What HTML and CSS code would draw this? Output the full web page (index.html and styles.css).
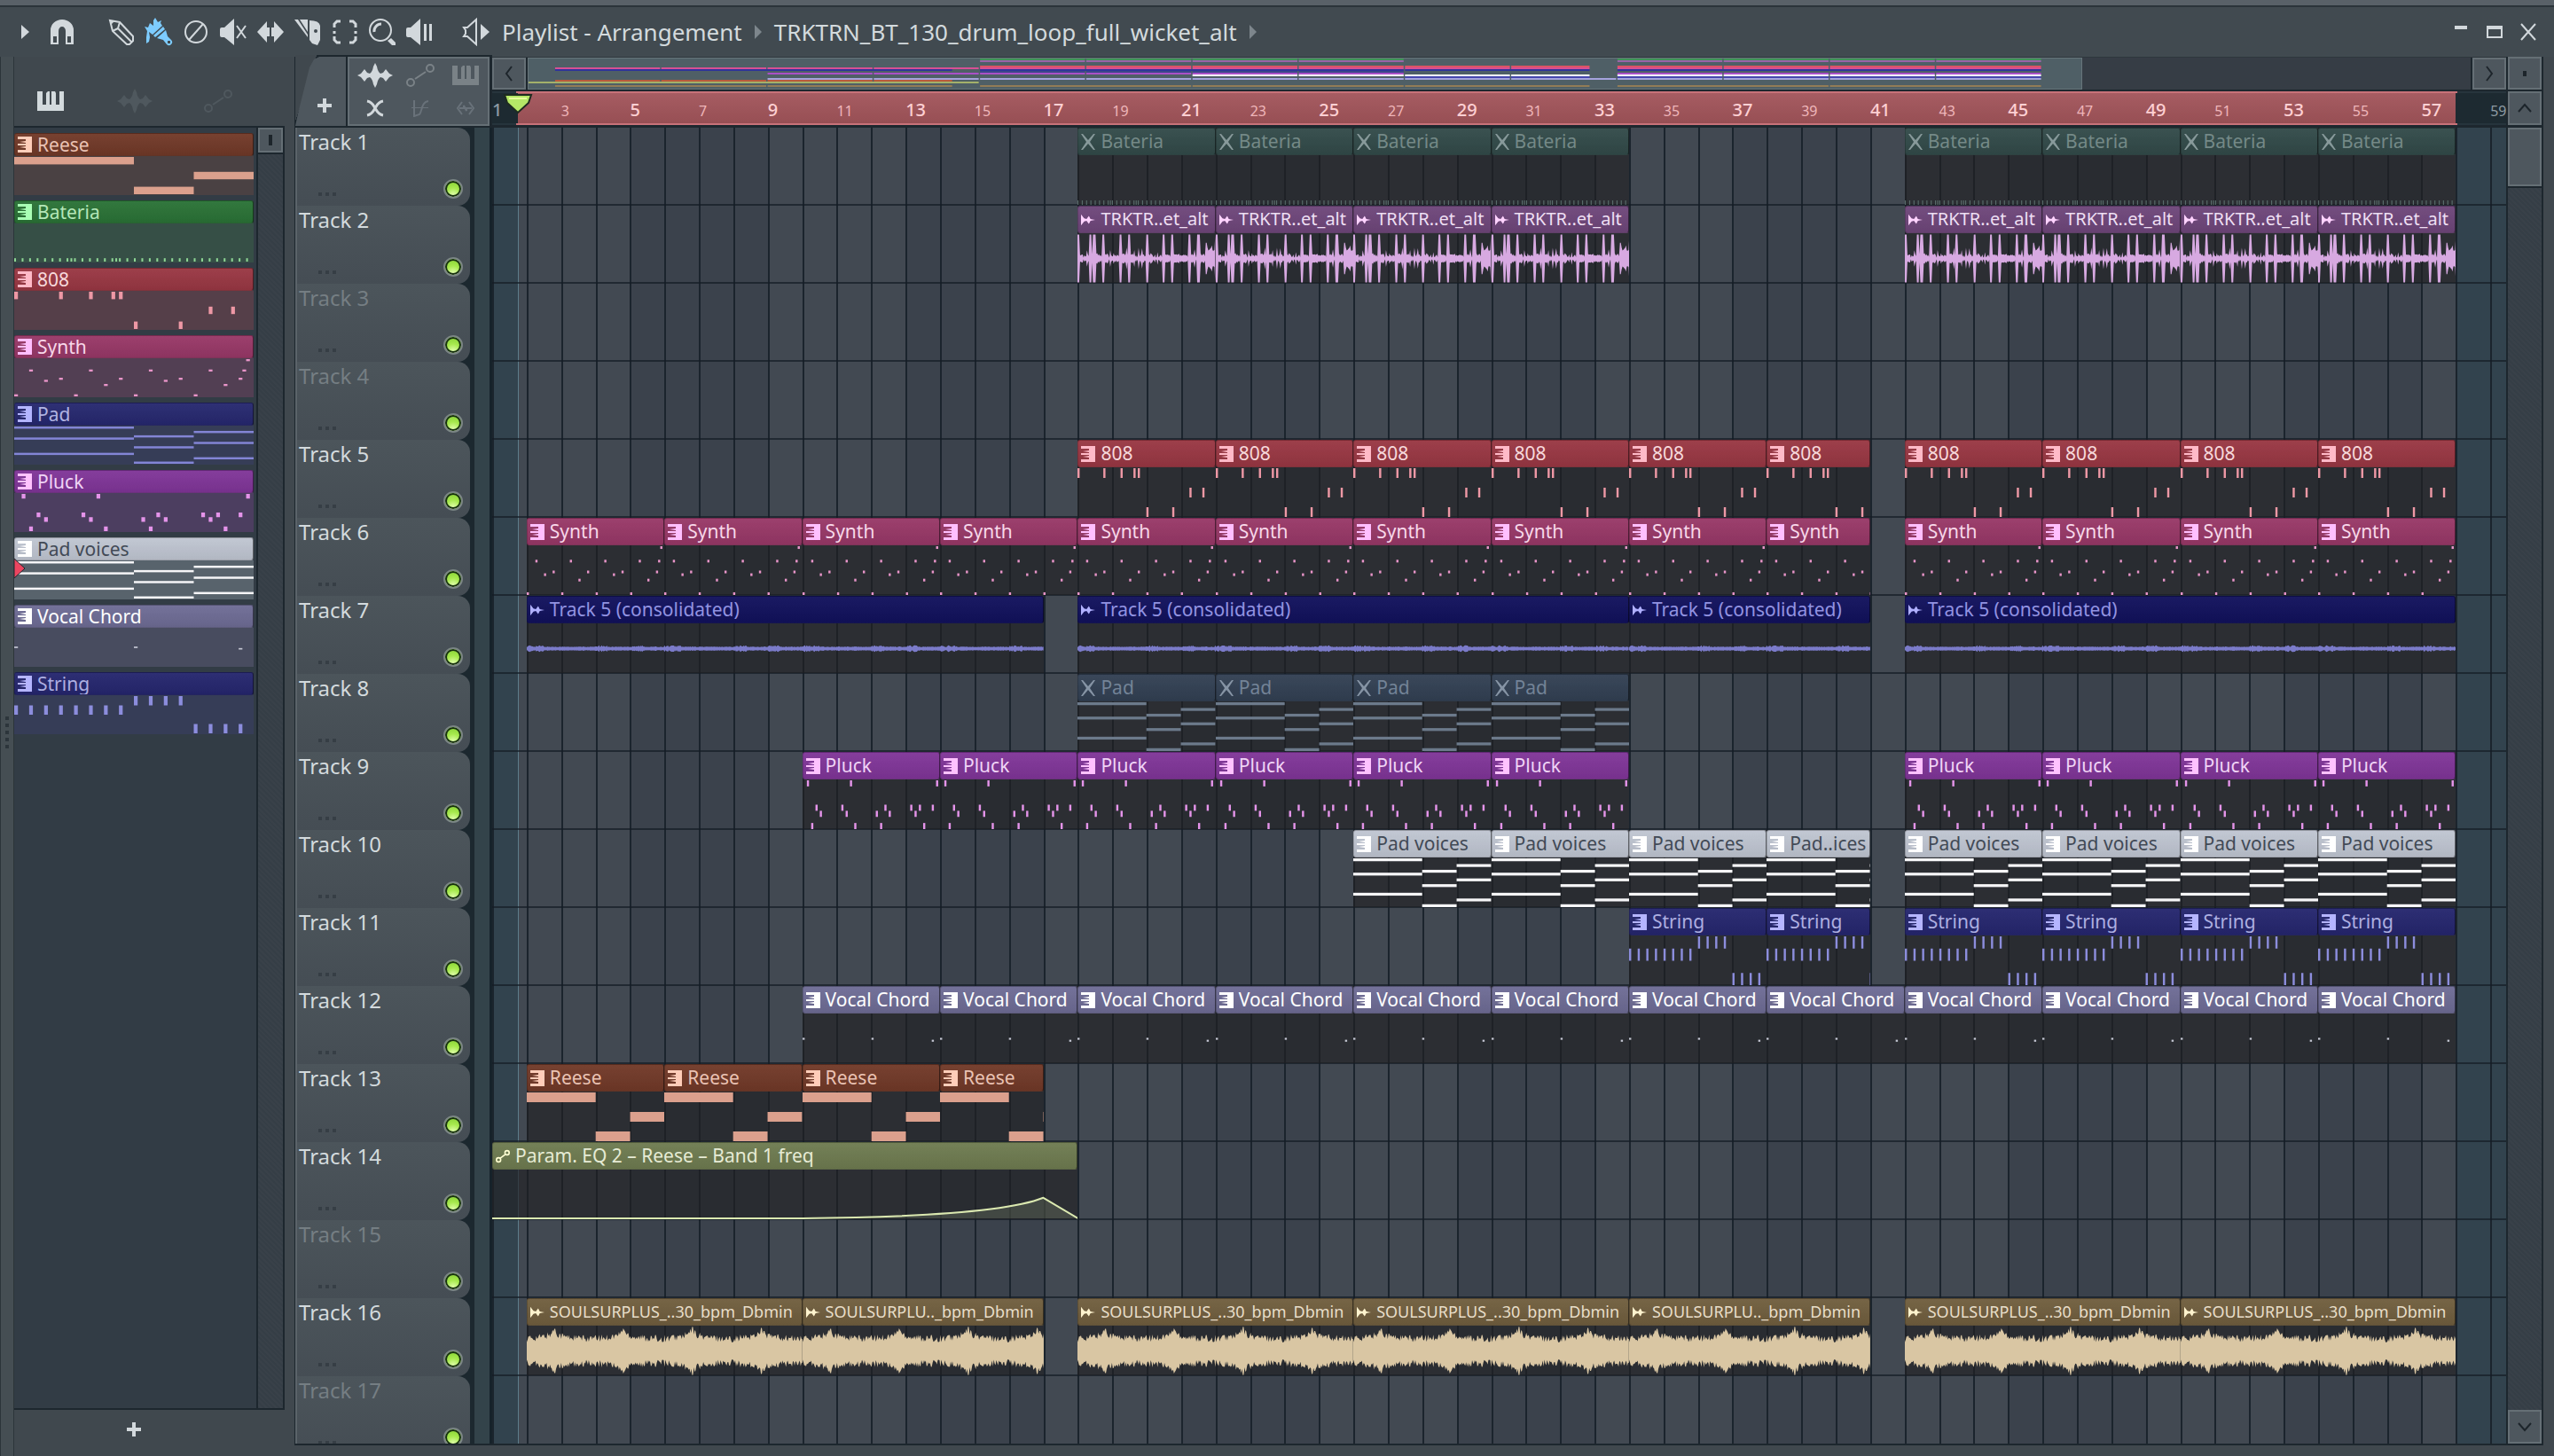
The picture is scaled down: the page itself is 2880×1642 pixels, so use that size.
FILE: index.html
```
<!DOCTYPE html>
<html lang="en">
<head>
    <meta charset="UTF-8" />
    <meta name="viewport" content="width=device-width, initial-scale=1.0" />
    <link rel="stylesheet" href="styles.css">
    <title>Playlist - Arrangement</title>
</head>
<body>
    <div class="strip"></div>
    <header class="titlebar">
        <button class="tool tool-menu" aria-label="Menu"><svg width="10" height="18" viewBox="0 0 10 18"><path d="M0 1L9 9L0 17Z"/></svg></button>
        <button class="tool tool-snap" aria-label="Snap"><svg width="28" height="30" viewBox="0 0 28 30"><path d="M1 29V13a13 12 0 0 1 26 0v16h-9V14a4 5 0 0 0-8 0v15Z"/><path class="hole" d="M4 20h4v7H4ZM20 20h4v7h-4Z"/></svg></button>
        <div class="tools">
            <button class="tool" aria-label="Draw"><svg width="30" height="30" viewBox="0 0 30 30"><path class="line" d="M2 2l11 2 15 16v5l-4 4h-3L5 14ZM13 4l-2 7-6 3M11 11l15 15"/><path d="M2 2l5 1-4 4Z"/></svg></button>
            <button class="tool active" aria-label="Paint"><svg width="32" height="32" viewBox="0 0 32 32"><path d="M0 10l4 1 2-5 4 3V3l2-3 3 5 4-2-1 3 2 3L9 19l-4-3 1 6-1 5-3 2 0-7 1-7Z"/><path d="M21 10l2 3-11 9-2-2Z"/><path fill-rule="evenodd" d="M24 14l2 7 4 4a3 3 0 0 1-5 5l-4-5-7-2ZM26 26v3h3v-3Z"/></svg></button>
            <button class="tool" aria-label="Delete"><svg width="30" height="30" viewBox="0 0 30 30"><circle class="line" cx="15" cy="15" r="12"/><path class="line" d="M7 24L23 6"/></svg></button>
            <button class="tool" aria-label="Mute"><svg width="32" height="32" viewBox="0 0 32 32"><path d="M1 13q0-2 2-2h3L17 1v30L6 22H3q-2 0-2-2Z"/><path class="line" d="M20 9l10 14M30 9L20 23"/></svg></button>
            <button class="tool" aria-label="Slip"><svg width="32" height="30" viewBox="0 0 32 30"><path d="M1 15L12 3v7h3v10h-3v7ZM31 15L20 3v7h-3v10h3v7Z"/></svg></button>
            <button class="tool" aria-label="Slice"><svg width="32" height="32" viewBox="0 0 32 32"><path d="M1 2h4l11 17v3ZM7 2h9v14ZM18 3q11 0 12 6v16l-3 6-6-2-3-4Z"/><circle class="hole" cx="25" cy="15" r="2"/></svg></button>
            <button class="tool" aria-label="Select"><svg width="30" height="30" viewBox="0 0 30 30"><path class="line thick" d="M10 3H6L3 6v4M20 3h4l3 3v4M10 27H6l-3-3v-4M20 27h4l3-3v-4M3 14v3M27 14v3"/></svg></button>
            <button class="tool" aria-label="Zoom"><svg width="32" height="32" viewBox="0 0 32 32"><circle class="line" cx="14" cy="14" r="12"/><path class="line thick" d="M7 16a8 8 0 0 1 8-9"/><path d="M22 26l4-3 5 5v3h-4Z"/></svg></button>
            <button class="tool" aria-label="Playback"><svg width="32" height="32" viewBox="0 0 32 32"><path d="M1 13q0-2 2-2h3L17 1v30L6 22H3q-2 0-2-2ZM21 7h3v19h-3ZM27 7h3v19h-3Z"/></svg></button>
        </div>
        <button class="tool tool-preview" aria-label="Preview"><svg width="32" height="32" viewBox="0 0 32 32"><path class="line" d="M2 11h4l10-9v28L6 21H2l2-3v-4Z"/><path d="M21 7l10 9-10 9Z"/></svg></button>
        <h1 class="crumbs">
            <a href="#">Playlist - Arrangement</a>
            <svg width="8" height="16" viewBox="0 0 8 16"><path d="M0 0l8 8-8 8Z"/></svg>
            <a href="#">TRKTRN_BT_130_drum_loop_full_wicket_alt</a>
            <svg width="8" height="16" viewBox="0 0 8 16"><path d="M0 0l8 8-8 8Z"/></svg>
        </h1>
        <div class="window-buttons">
            <button class="tool" aria-label="Minimize"><svg width="18" height="18" viewBox="0 0 18 18"><path d="M2 2h14v4H2Z"/></svg></button>
            <button class="tool" aria-label="Maximize"><svg width="18" height="18" viewBox="0 0 18 18"><path fill-rule="evenodd" d="M0 2h18v14H0ZM2 6v8h14V6Z"/></svg></button>
            <button class="tool" aria-label="Close"><svg width="20" height="20" viewBox="0 0 20 20"><path class="line" d="M2 1l16 18M18 1L2 19"/></svg></button>
        </div>
    </header>

    <main>
        <div class="gutter"><i></i><i></i><i></i><i></i><i></i></div>

        <aside class="picker">
            <div class="picker-tabs">
                <button aria-label="Patterns"><svg width="32" height="24" viewBox="0 0 32 24"><use href="#piano"/></svg></button>
                <button class="off" aria-label="Audio"><svg width="40" height="28" viewBox="0 0 40 28"><use href="#wave"/></svg></button>
                <button class="off" aria-label="Automation"><svg width="32" height="26" viewBox="0 0 32 26"><use href="#auto"/></svg></button>
            </div>
            <div class="picker-body">
                <ul id="picker"></ul>
                <div class="picker-scroll"><button class="thumb" aria-label="Scroll patterns"><i></i></button></div>
            </div>
            <button class="add" aria-label="Add pattern"><svg width="16" height="16" viewBox="0 0 16 16"><path d="M6 0h4v6h6v4h-6v6H6v-6H0V6h6Z"/></svg></button>
        </aside>

        <section class="playlist">
            <div class="corner">
                <button class="add-track" aria-label="Add track"><svg width="16" height="16" viewBox="0 0 16 16"><path d="M6 0h4v6h6v4h-6v6H6v-6H0V6h6Z"/></svg></button>
                <div class="modes">
                    <button aria-label="Show audio"><svg width="40" height="28" viewBox="0 0 40 28"><use href="#wave"/></svg></button>
                    <button class="off" aria-label="Show automation"><svg width="32" height="26" viewBox="0 0 32 26"><use href="#auto"/></svg></button>
                    <button class="off" aria-label="Show patterns"><svg width="32" height="24" viewBox="0 0 32 24"><use href="#piano"/></svg></button>
                    <button aria-label="Crossfade"><svg width="20" height="20" viewBox="0 0 20 20"><path class="line thick" d="M1 2c6 1 7 5 9 8s3 7 9 8M19 2c-6 1-7 5-9 8s-3 7-9 8"/></svg></button>
                    <button class="faint" aria-label="Slide"><svg width="22" height="20" viewBox="0 0 22 20"><path class="line" d="M4 1v18l6-2c3-3 2-14 10-15"/><path d="M1 9h19v1H1Z"/></svg></button>
                    <button class="faint" aria-label="Stretch"><svg width="22" height="16" viewBox="0 0 22 16"><path class="line" d="M7 1L2 8l5 7M15 1l5 7-5 7M4 8h5V5l3 6V8h6"/></svg></button>
                </div>
            </div>

            <div class="overview">
                <button class="scroll-btn" aria-label="Scroll left"><svg width="12" height="18" viewBox="0 0 12 18"><path d="M9 1L3 9l6 8"/></svg></button>
                <div class="map-track"><div class="map" id="map"></div></div>
                <button class="scroll-btn" aria-label="Scroll right"><svg width="12" height="18" viewBox="0 0 12 18"><path d="M3 1l6 8-6 8"/></svg></button>
            </div>
            <button class="scroll-btn dot" aria-label="Zoom"><i></i></button>

            <div class="ruler" id="ruler">
                <svg class="playhead" width="34" height="24" viewBox="0 0 34 24"><path d="M2 2h30l-3 9-12 11L5 11Z"/><path class="shine" d="M7 6h20"/></svg>
            </div>
            <button class="scroll-btn" aria-label="Scroll up"><svg width="18" height="12" viewBox="0 0 18 12"><path d="M2 10l7-8 7 8"/></svg></button>

            <div class="heads" id="heads"></div>
            <div class="lanes" id="lanes"></div>
            <div class="vscroll">
                <div class="vthumb"></div>
                <button class="scroll-btn" aria-label="Scroll down"><svg width="18" height="12" viewBox="0 0 18 12"><path d="M2 2l7 8 7-8"/></svg></button>
            </div>
        </section>
    </main>

    <svg class="defs" aria-hidden="true">
        <symbol id="piano" viewBox="0 0 32 24"><path d="M1 1h6v15h4V3l2-2h2v15h2V1h2v0h2l1 2v13h4V1h5v22H1Z"/></symbol>
        <symbol id="wave" viewBox="0 0 40 28"><path d="M0 14l4-2 4-5 3 4 3 1q3-2 4-8l2-4 2 4q1 6 4 8l3-1 3-4 4 5 4 2-4 2-4 5-3-4-3-1q-3 2-4 8l-2 4-2-4q-1-6-4-8l-3 1-3 4-4-5Z"/></symbol>
        <symbol id="auto" viewBox="0 0 32 26"><circle class="line" cx="5" cy="21" r="4"/><circle class="line" cx="27" cy="5" r="4"/><path class="line" d="M10 17L22 9"/></symbol>
        <symbol id="c-pattern" viewBox="0 0 16 18"><path d="M0 0h16v18H0v-3h9v-2l-7-1 7-1v-1H0V8h9V7L2 6l7-1V3H0Z"/></symbol>
        <symbol id="c-audio" viewBox="0 0 18 18"><path d="M0 2l4 5 3 1 3-4 2 4 6 1-6 1-2 4-3-4-3 1-4 5Z"/></symbol>
        <symbol id="c-mute" viewBox="0 0 16 18"><path d="M0 0h2l6 7 6-7h2l-6 9 6 9h-2l-6-7-6 7H0l6-9Z"/></symbol>
        <symbol id="c-auto" viewBox="0 0 20 18"><circle class="line" cx="4" cy="14" r="3"/><circle class="line" cx="16" cy="4" r="3"/><path class="line" d="M6 12L14 6"/></symbol>
    </svg>

    <script src="script.js"></script>
</body>
</html>
```
FILE: styles.css
```
:root {
    --bars: 58.46;
    --bar: calc(100% / var(--bars));
    --edge: #1d272e;
    --btn: #4e575e;
    --btn-line: #656f75;
    --icon: #d2d8dc;
}

* {
    box-sizing: border-box;
}

body {
    margin: 0;
    height: 100vh;
    display: flex;
    flex-direction: column;
    overflow: hidden;
    background-color: #40484e;
    color: #d3dadd;
    font-family: "Noto Sans", "Open Sans", sans-serif;
    font-size: 20px;
}

button {
    margin: 0;
    padding: 0;
    border: none;
    background: none;
    color: inherit;
    font: inherit;
    display: flex;
    align-items: center;
    justify-content: center;
}

svg {
    display: block;
    fill: currentColor;
}

.line {
    fill: none;
    stroke: currentColor;
    stroke-width: 2;
}

.thick {
    stroke-width: 3;
}

.defs {
    position: absolute;
    width: 0;
    height: 0;
}

.strip {
    flex: none;
    height: 8px;
    background-color: #596168;
    border-bottom: 2px solid #2b343a;
}

/* title bar */

.titlebar {
    flex: none;
    height: 56px;
    display: flex;
    align-items: center;
    padding: 0 10px 0 16px;
    background-color: #414a50;
}

.tools, .window-buttons {
    display: flex;
}

.tool {
    width: 42px;
    height: 40px;
    color: var(--icon);
}

.tool-menu {
    width: 26px;
}

.tool-snap {
    width: 56px;
    margin-right: 18px;
}

.tool-preview {
    margin: 0 8px 0 22px;
}

.tool.active {
    color: #7dccff;
}

.hole {
    fill: #414a50;
}

.crumbs {
    flex: 1;
    display: flex;
    align-items: center;
    gap: 14px;
    margin: 0;
    font-size: 26px;
    line-height: 36px;
    font-weight: 400;
    white-space: nowrap;
}

.crumbs a {
    color: #d3dadd;
    text-decoration: none;
}

.crumbs svg {
    color: #7d868c;
}

.window-buttons .tool {
    width: 38px;
}

main {
    flex: 1;
    min-height: 0;
    display: flex;
    padding: 0 12px 14px 0;
}

.gutter {
    flex: none;
    width: 16px;
    margin-bottom: -14px;
    padding-bottom: 54px;
    display: flex;
    flex-direction: column;
    align-items: center;
    justify-content: center;
    gap: 4px;
    border-left: 1px solid #2c353a;
    border-right: 1px solid #2c353a;
    background-color: #454e53;
}

.gutter i {
    width: 4px;
    height: 4px;
    background-color: #2c353b;
}

/* picker */

.picker {
    flex: none;
    width: 305px;
    margin-right: 11px;
    display: flex;
    flex-direction: column;
}

.picker-tabs {
    height: 78px;
    padding: 22px 59px 0 25px;
    display: flex;
    align-items: center;
    justify-content: space-between;
}

.off {
    color: #757e83;
}

.picker-tabs .off {
    color: #4f585e;
}

.picker-body {
    flex: 1;
    min-height: 0;
    display: flex;
    border: solid var(--edge);
    border-width: 2px 2px 2px 0;
    background-color: #323c45;
}

.picker ul {
    flex: 1;
    margin: 0;
    padding: 6px 3px 0 0;
    list-style: none;
    border-right: 2px solid var(--edge);
}

.picker li {
    position: relative;
    height: 70px;
    margin-bottom: 6px;
}

.picker .clip-head {
    height: 26px;
    line-height: 24px;
}

.picker .clip-head span {
    padding-bottom: 0;
}

.picker .clip-body {
    height: 44px;
    padding: 1px 0;
    background-color: var(--body);
}

.cursor {
    position: absolute;
    left: 0;
    top: 23px;
    color: #ec4560;
    stroke: #20262c;
}

.picker-scroll, .vscroll {
    background: repeating-linear-gradient(45deg, #353e46 0 2px, #394149 2px 4px);
}

.picker-scroll {
    width: 28px;
}

.thumb {
    width: 28px;
    height: 28px;
    background-color: var(--btn);
    border: 2px solid var(--btn-line);
    box-shadow: 0 2px var(--edge);
}

.thumb i {
    width: 4px;
    height: 12px;
    background-color: #1d252b;
}

.add {
    height: 38px;
    padding-top: 6px;
    margin-right: 36px;
    color: var(--icon);
}

/* playlist */

.playlist {
    flex: 1;
    min-width: 0;
    display: grid;
    grid-template-columns: 222px minmax(0, 1fr) 40px;
    grid-template-rows: 39px 41px minmax(0, 1fr);
    border: solid var(--edge);
    border-width: 0 2px 2px 1px;
    margin-bottom: -2px;
    background-color: var(--edge);
}

.corner {
    grid-row: 1 / 3;
    display: flex;
    gap: 2px;
    margin-top: -2px;
    padding: 2px 3px 2px 0;
    background: linear-gradient(108deg, #40484e 23px, var(--edge) 23px);
}

.add-track {
    width: 57px;
    padding: 32px 0 0 8px;
    background-color: var(--btn);
    clip-path: polygon(27px 0, 100% 0, 100% 100%, 0 100%, 3px 64px, 16px 12px, 21px 3px);
    color: var(--icon);
}

.modes {
    flex: 1;
    display: grid;
    grid-template-columns: repeat(3, 1fr);
    grid-template-rows: 1fr 1fr;
    padding: 0 0 0 4px;
    background-color: var(--btn);
    border: 2px solid var(--btn-line);
}

.modes button {
    color: var(--icon);
}

.modes .off {
    color: #7a8287;
}

.modes .faint {
    color: #69727a;
}

.scroll-btn {
    width: 38px;
    height: 38px;
    background-color: var(--btn);
    border: 2px solid var(--btn-line);
}

.scroll-btn svg {
    fill: none;
    stroke: #1d252b;
    stroke-width: 2;
}

.playlist > .scroll-btn {
    margin-left: 2px;
}

.playlist > .dot {
    height: 37px;
}

.dot i {
    width: 4px;
    height: 6px;
    background-color: #1d252b;
}

.overview {
    display: flex;
    border-top: 1px solid #2e373d;
    padding-bottom: 2px;
    gap: 2px;
}

.overview .scroll-btn {
    height: 36px;
}

.map-track {
    flex: 1;
    min-width: 0;
    background-color: #363d45;
}

.map {
    width: 80%;
    height: 36px;
    border: 1px solid #67757a;
    background-color: #4f5f66;
}

.map svg {
    width: 100%;
    height: 34px;
}

.ruler {
    position: relative;
    display: grid;
    grid-template-columns: repeat(58, minmax(0, 100fr)) minmax(0, 46fr);
    height: 38px;
    border-top: 2px solid #c87279;
    border-bottom: 2px solid #c87279;
    border-image: linear-gradient(90deg, #26343c calc(var(--bar) * .74), #c87279 0 calc(var(--bar) * 57), #26343c 0) 2;
    background: linear-gradient(90deg, #1d2a31 calc(var(--bar) * .74), transparent 0 calc(var(--bar) * 57), #1d2a31 0), linear-gradient(#a65c62, #974f54);
}

.ruler span {
    grid-row: 1;
    font-size: 16px;
    line-height: 40px;
    color: #efb6ba;
    white-space: nowrap;
}

.ruler .major {
    font-size: 20px;
    line-height: 38px;
    font-weight: 500;
    color: #ffd0d3;
}

.ruler .outside {
    color: #8d9ba3;
}

.playhead {
    position: absolute;
    left: calc(var(--bar) * .74 - 17px);
    top: 0;
    fill: #b5e767;
    stroke: #1e2b20;
    stroke-width: 2;
}

.playhead .shine {
    stroke: #e7ff9c;
}

.heads {
    overflow: hidden;
    display: flex;
    flex-direction: column;
    background: linear-gradient(90deg, #1c282f 202px, #33434a 202px 219px, #16222a 219px);
}

.head {
    flex: none;
    position: relative;
    width: 197px;
    height: 88px;
    padding: 0 8px 8px 2px;
    display: grid;
    grid-template-columns: 1fr auto;
    grid-template-rows: 32px 1fr;
    background: linear-gradient(#4c555b, #454d54);
    border-left: 2px solid #5b646a;
    border-radius: 0 14px 14px 0;
}

.head label {
    grid-column: 1 / 3;
    font-size: 24px;
    line-height: 32px;
}

.head.empty label {
    color: #757e83;
}

.head button {
    align-self: end;
    justify-content: flex-start;
    gap: 4px;
    height: 10px;
    padding-left: 22px;
}

.head button i {
    width: 4px;
    height: 4px;
    background-color: #363e45;
}

.head input {
    appearance: none;
    align-self: end;
    width: 22px;
    height: 22px;
    margin: 0;
    border: 2px solid #7b8585;
    border-radius: 50%;
    background: radial-gradient(circle at 50% 90%, #e4ffb0, #a7e94e 45%, #7ecb2c);
    box-shadow: inset 0 0 0 2px #173010;
}

.lanes {
    overflow: hidden;
    display: flex;
    flex-direction: column;
    background:
        linear-gradient(90deg, transparent calc(var(--bar) * .74), #5d7d8a 0 calc(var(--bar) * .74 + 1px), transparent 0),
        repeating-linear-gradient(90deg, #1b242d 0 2px, transparent 2px var(--bar)),
        linear-gradient(90deg, #32434e calc(var(--bar) * .74), transparent 0 calc(var(--bar) * 57), #32434e 0),
        repeating-linear-gradient(90deg, #424952 0 calc(var(--bar) * 4), #3b424c 0 calc(var(--bar) * 8));
}

.lane {
    flex: none;
    height: 88px;
    display: grid;
    grid-template-columns: repeat(58, minmax(0, 100fr)) minmax(0, 46fr);
    border-bottom: 2px solid #141c25b3;
}

.vscroll {
    display: flex;
    flex-direction: column;
    justify-content: space-between;
    margin-left: 2px;
}

.vthumb {
    height: 66px;
    background-color: var(--btn);
    border: 2px solid var(--btn-line);
    box-shadow: 0 2px var(--edge);
}

/* clips */

.clip {
    grid-row: 1;
    min-width: 0;
    background-color: #212023a6;
}

.clip-head {
    height: 31px;
    display: flex;
    align-items: center;
    gap: 6px;
    padding-left: 3px;
    overflow: hidden;
    white-space: nowrap;
    color: var(--text);
    background: linear-gradient(#ffffff0a, #00000012), var(--head);
    border: 1px solid #0000002e;
    border-right-color: #00000080;
    border-radius: 3px;
    font-size: 21px;
    line-height: 26px;
}

.clip-head span {
    padding-bottom: 2px;
}

.drums .clip-head {
    font-size: 20px;
}

.soul .clip-head {
    font-size: 18px;
}

.clip-head svg {
    flex: none;
    color: var(--mark);
}

.clip-body {
    height: 56px;
    padding-top: 1px;
    color: var(--note);
}

.clip-body svg {
    width: 100%;
    height: 100%;
}

.curve {
    fill: none;
    stroke: currentColor;
    stroke-width: 2;
    vector-effect: non-scaling-stroke;
}

.area {
    fill: #d9e8ac26;
}

.reese { --head: #713928; --text: #ebc3b4; --mark: #ffcdb9; --note: #dba08d; --body: #4a4143; }
.bateria { --head: #2a7236; --text: #b4e6b8; --mark: #a9ffb5; --note: #8ed695; --body: #364f46; }
.s808 { --head: #993743; --text: #f7d9dc; --mark: #ffbac8; --note: #ee98a5; --body: #553f49; }
.synth { --head: #983867; --text: #f8d8ea; --mark: #ffbfff; --note: #e995c9; --body: #523f53; }
.pad { --head: #26286f; --text: #b0b3e2; --mark: #b3b5ff; --note: #8385d6; --body: #363d57; }
.pluck { --head: #803598; --text: #f0d4f6; --mark: #ffc2ff; --note: #e594ea; --body: #4c3e60; }
.voices { --head: #bfc5d1; --text: #424a56; --mark: #ffffff; --note: #f6f6f8; --body: #58636c; }
.vocal { --head: #6e6c95; --text: #ffffff; --mark: #ffffff; --note: #c5c7d4; --body: #484c5f; }
.string { --head: #25266e; --text: #adafe1; --mark: #b5b5ff; --note: #8c8ddd; --body: #363d57; }
.drums { --head: #6e467a; --text: #eedff3; --mark: #ffd3ff; --note: #d7a9e1; }
.track5 { --head: #11115c; --text: #9293e2; --mark: #b0b0ff; --note: #7b7bca; }
.param { --head: #6e7b50; --text: #e6ebd5; --mark: #ffffd2; --note: #dbe9b0; }
.soul { --head: #705e3e; --text: #e8dec9; --mark: #fff3ce; --note: #d9c6a3; }
.bateria.muted { --head: #324a49; --text: #748987; --mark: #87999a; --note: #586b6a; }
.pad.muted { --head: #324053; --text: #738397; --mark: #8694a5; --note: #6c7a8b; }
```
FILE: script.js
```
const BARS = 58.46;

// every note is [start bar, row, length in bars]
const tick = 1 / 16;
const hits = (row, starts, len = tick) => starts.map(s => [s, row, len]);

const patterns = {
    reese: { rows: 5, notes: [[0, 0, 2], [2, 4, 1], [3, 2, 1]] },
    bateria: { rows: 11, notes: hits(10, [...Array(32).keys()].map(i => i / 8).concat([0.94, 1.69]), 0.03) },
    s808: { rows: 5, notes: [...hits(0, [0, 0.75, 1.25, 1.625, 1.75]), ...hits(4, [2, 2.75]), ...hits(2, [3.25, 3.625])] },
    synth: { rows: 18, notes: [...hits(0, [3.875]), ...hits(5, [0.25, 1.25, 2.25, 3.25, 3.8125]), ...hits(9, [0.75, 1.75, 2.75, 3.75]), ...hits(10, [0.5, 2.5]), ...hits(12, [1.5, 3.5]), ...hits(17, [0, 1, 2, 3])] },
    pad: { rows: 17, notes: [[0, 0, 2], [0, 5, 2], [0, 12, 2], [2, 4, 1], [2, 9, 1], [2, 16, 1], [3, 2, 1], [3, 7, 1], [3, 14, 1]] },
    pluck: { rows: 8, notes: [...hits(0, [0.125, 1.375, 3.875]), ...hits(4, [0.375, 1.125, 2.375, 3.125, 3.375, 3.75]), ...hits(5, [0.5, 1.25, 2.125, 2.5, 3.25]), ...hits(7, [0.25, 1.5, 2.25, 3.5])] },
    vocal: { rows: 25, notes: [...hits(12, [0, 2]), ...hits(13, [3.75])] },
    string: { rows: 4, notes: [...hits(1, [0, 0.25, 0.5, 0.75, 1, 1.25, 1.5, 1.75]), ...hits(0, [2, 2.25, 2.5, 2.75]), ...hits(3, [3, 3.25, 3.5, 3.75])] }
};
patterns.voices = patterns.pad;

const pickerItems = [
    ["reese", "Reese"], ["bateria", "Bateria"], ["s808", "808"], ["synth", "Synth"], ["pad", "Pad"],
    ["pluck", "Pluck"], ["voices", "Pad voices"], ["vocal", "Vocal Chord"], ["string", "String"]
];

const four = (...starts) => starts.map(s => [s, 4]);
const soulLong = "SOULSURPLUS_..30_bpm_Dbmin";
const soulShort = "SOULSURPLU.._bpm_Dbmin";

// clips are [start bar, length, own name]
const tracks = [
    { type: "bateria", name: "Bateria", muted: true, color: "#3f9357", clips: four(18, 22, 26, 30, 42, 46, 50, 54) },
    { type: "drums", name: "TRKTR..et_alt", color: "#9a63a8", clips: four(18, 22, 26, 30, 42, 46, 50, 54) },
    null,
    null,
    { type: "s808", name: "808", color: "#dc5464", clips: [...four(18, 22, 26, 30, 34), [38, 3], ...four(42, 46, 50, 54)] },
    { type: "synth", name: "Synth", color: "#d65095", clips: [...four(2, 6, 10, 14, 18, 22, 26, 30, 34), [38, 3], ...four(42, 46, 50, 54)] },
    { type: "track5", name: "Track 5 (consolidated)", color: "#30349a", clips: [[2, 15], [18, 16], [34, 7], [42, 16]] },
    { type: "pad", name: "Pad", muted: true, color: "#3d4688", clips: four(18, 22, 26, 30) },
    { type: "pluck", name: "Pluck", color: "#aa50c8", clips: four(10, 14, 18, 22, 26, 30, 42, 46, 50, 54) },
    { type: "voices", name: "Pad voices", color: "#ffffff", clips: [...four(26, 30, 34), [38, 3, "Pad..ices"], ...four(42, 46, 50, 54)] },
    { type: "string", name: "String", color: "#4546ae", clips: [...four(34), [38, 3], ...four(42, 46, 50, 54)] },
    { type: "vocal", name: "Vocal Chord", color: "#a5a3dd", clips: four(10, 14, 18, 22, 26, 30, 34, 38, 42, 46, 50, 54) },
    { type: "reese", name: "Reese", color: "#b85a3c", clips: [...four(2, 6, 10), [14, 3]] },
    { type: "param", name: "Param. EQ 2 – Reese – Band 1 freq", color: "#a3b06a", clips: [[1, 17]] },
    null,
    { type: "soul", name: soulLong, color: "#927c56", clips: [[2, 8], [10, 7, soulShort], [18, 8], [26, 8], [34, 7, soulShort], [42, 8], [50, 8]] },
    null
];

function noise(n) {
    const v = Math.sin(n * 127.1) * 43758.5453;
    return v - Math.floor(v);
}

// amplitude (0..1) at bar t of the three audio clips
const levels = {
    drums(t) {
        const p = (t % 4) / 4;
        const i = Math.round((t % 4) * 40);
        const kicks = [0.003, 0.094, 0.122, 0.19, 0.315, 0.374, 0.504, 0.626, 0.69, 0.815, 0.878];
        if (kicks.some(k => Math.abs(p - k) < 0.01)) return 0.98;
        if (p > 0.93) return 0.3 + noise(i) * 0.35;
        if (kicks.some(k => p > k && p - k < 0.035)) return 0.22 - noise(i) * 0.1;
        if (p > 0.69 && p < 0.79) return 0.1 + noise(i) * 0.12;
        return noise(i) > 0.65 ? noise(i + 9) * 0.45 : 0.03 + noise(i + 3) * 0.15;
    },
    track5(t) {
        const p = t % 4;
        const burst = p < 0.5 || (p > 2 && p < 2.4) || (p > 3 && p < 3.4);
        return 0.06 + noise(Math.round(t * 40)) * (burst ? 0.08 : 0.03);
    },
    soul(t) {
        const p = t % 2;
        const d = Math.abs(p - 0.8);
        const peak = Math.exp(-d * 22) * 0.22 + Math.exp(-d * 3) * 0.25;
        return 0.34 + peak + noise(Math.round(t * 40)) * 0.3;
    }
};

function wave(type, len) {
    const steps = len * 40;
    let top = "";
    let bottom = "";
    for (let i = 0; i <= steps; i++) {
        const a = Math.min(levels[type](i / 40), 1) * 50;
        top += `L${i} ${(50 - a).toFixed(1)}`;
        bottom = `L${i} ${(50 + a).toFixed(1)}` + bottom;
    }
    return `<svg viewBox="0 0 ${steps} 100" preserveAspectRatio="none"><path d="M0 50${top}${bottom}Z"/></svg>`;
}

function notes(type, len) {
    const p = patterns[type];
    const rects = p.notes.map(([x, y, w]) => `<rect x="${x}" y="${y}" width="${w}" height="1"/>`).join("");
    return `<svg viewBox="0 0 ${len} ${p.rows}" preserveAspectRatio="none">${rects}</svg>`;
}

function automation() {
    const line = "M0 98H9C12.5 96 15 84 16 56L17 98";
    return `<svg viewBox="0 0 17 100" preserveAspectRatio="none"><path class="area" d="${line}Z"/><path class="curve" d="${line}"/></svg>`;
}

function clipInner(type, name, len, muted) {
    let icon = "pattern";
    let body;
    if (levels[type]) {
        icon = "audio";
        body = wave(type, len);
    }
    else if (type === "param") {
        icon = "auto";
        body = automation();
    }
    else {
        body = notes(type, len);
    }
    if (muted) icon = "mute";
    return `<div class="clip-head"><svg width="16" height="18"><use href="#c-${icon}"/></svg><span>${name}</span></div>
        <div class="clip-body">${body}</div>`;
}

document.getElementById("picker").innerHTML = pickerItems.map(([type, name]) => {
    const cursor = type === "voices" ? '<svg class="cursor" width="14" height="24" viewBox="0 0 14 24"><path d="M0 1l12 11L0 23Z"/></svg>' : "";
    return `<li class="${type}">${clipInner(type, name, 4)}${cursor}</li>`;
}).join("");

document.getElementById("heads").innerHTML = tracks.map((track, i) => `
    <div class="head ${track ? "" : "empty"}">
        <label for="t${i + 1}">Track ${i + 1}</label>
        <button aria-label="Track ${i + 1} options"><i></i><i></i><i></i></button>
        <input type="checkbox" id="t${i + 1}" checked>
    </div>`).join("");

document.getElementById("lanes").innerHTML = tracks.map(track => {
    const clips = track ? track.clips.map(([start, len, name]) =>
        `<div class="clip ${track.type} ${track.muted ? "muted" : ""}" style="grid-column: ${start} / span ${len}">
            ${clipInner(track.type, name || track.name, len, track.muted)}
        </div>`).join("") : "";
    return `<div class="lane">${clips}</div>`;
}).join("");

let labels = "";
for (let bar = 1; bar <= 59; bar += 2) {
    const cls = (bar % 4 === 1 ? "major " : "") + (bar === 1 || bar === 59 ? "outside" : "");
    labels += `<span class="${cls}" style="grid-column: ${bar}">${bar}</span>`;
}
document.getElementById("ruler").insertAdjacentHTML("beforeend", labels);

document.getElementById("map").innerHTML = `<svg viewBox="0 0 ${BARS} 17" preserveAspectRatio="none">` +
    tracks.map((track, i) => track ? track.clips.map(([start, len]) =>
        `<rect x="${start - 1}" y="${i}" width="${len - 0.05}" height="1" fill="${track.color}"/>`).join("") : "").join("") + "</svg>";
```
